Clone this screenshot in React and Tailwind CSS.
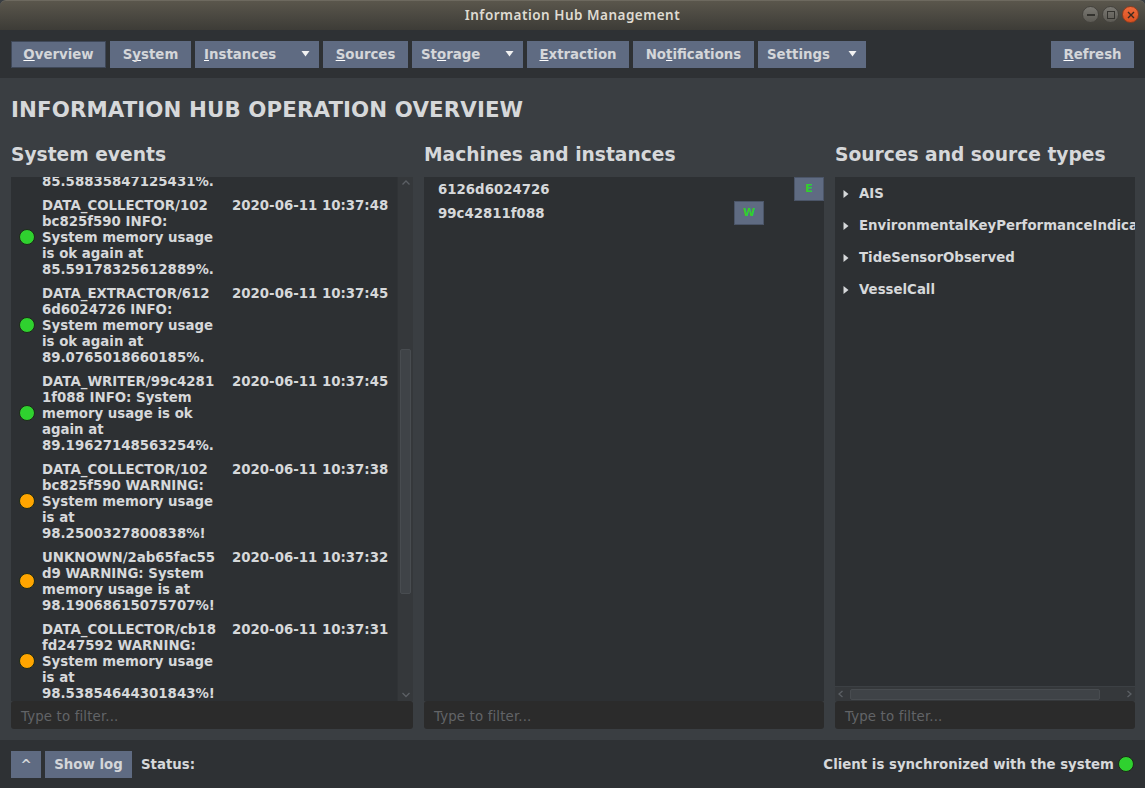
const djv = { fontFamily: '"DejaVu Sans", sans-serif' };

function Mn({ children }) {
  return <span className="underline decoration-white decoration-1 underline-offset-[1px] [text-decoration-skip-ink:none]">{children}</span>;
}

function Btn({ children, className = "" }) {
  return (
    <div className={"h-[27px] pt-[2px] flex items-center bg-[#5f6b82] text-[13.33px] font-bold text-[#d4d6d9] whitespace-nowrap " + className}>
      {children}
    </div>
  );
}

function MenuBtn({ children, width }) {
  return (
    <Btn className={"justify-between pl-[9px] pr-[9px] " + width}>
      <span>{children}</span>
      <svg width="9" height="6" viewBox="0 0 9 6" className="-mt-[2px]"><path d="M0.5 0h8L4.5 5.5z" fill="#f2f2f2" /></svg>
    </Btn>
  );
}

function Dot({ color }) {
  return <span className={"block w-[16px] h-[16px] rounded-full border border-[#1c2a18] shrink-0 " + color} />;
}

const events = [
  { c: "bg-[#2fd12f]", t: "10:37:48", l: ["DATA_COLLECTOR/102", "bc825f590 INFO:", "System memory usage", "is ok again at", "85.59178325612889%."] },
  { c: "bg-[#2fd12f]", t: "10:37:45", l: ["DATA_EXTRACTOR/612", "6d6024726 INFO:", "System memory usage", "is ok again at", "89.0765018660185%."] },
  { c: "bg-[#2fd12f]", t: "10:37:45", l: ["DATA_WRITER/99c4281", "1f088 INFO: System", "memory usage is ok", "again at", "89.19627148563254%."] },
  { c: "bg-[#ffa500]", t: "10:37:38", l: ["DATA_COLLECTOR/102", "bc825f590 WARNING:", "System memory usage", "is at", "98.2500327800838%!"] },
  { c: "bg-[#ffa500]", t: "10:37:32", l: ["UNKNOWN/2ab65fac55", "d9 WARNING: System", "memory usage is at", "98.19068615075707%!"] },
  { c: "bg-[#ffa500]", t: "10:37:31", l: ["DATA_COLLECTOR/cb18", "fd247592 WARNING:", "System memory usage", "is at", "98.53854644301843%!"] },
];

function EventRow({ e }) {
  return (
    <div className="flex items-center pl-[8px] py-[4px]">
      <Dot color={e.c} />
      <div className="ml-[7px] w-[190px] shrink-0 whitespace-nowrap">
        {e.l.map((x, i) => <div key={i} className="h-[16px] leading-[18px]">{x}</div>)}
      </div>
      <div className="self-start h-[16px] leading-[18px] whitespace-nowrap">2020-06-11 {e.t}</div>
    </div>
  );
}

function Filter() {
  return (
    <div className="h-[28px] shrink-0 bg-[#2b2b2b] rounded-[3px] flex items-center px-[10px] pt-[3px] text-[13.33px] tracking-[0.15px] text-[#626467]">
      Type to filter...
    </div>
  );
}

function Heading({ children }) {
  return <h2 className="h-[23px] mb-[11px] leading-[23px] text-[18.67px] font-bold text-[#d6d8da] whitespace-nowrap">{children}</h2>;
}

function Chevron({ d }) {
  return (
    <svg width="10" height="8" viewBox="0 0 10 8" className="shrink-0">
      <path d={d} fill="none" stroke="#5c6065" strokeWidth="1.3" />
    </svg>
  );
}

export default function App() {
  return (
    <div className="w-[1145px] h-[788px] flex flex-col overflow-hidden bg-[#3a3e42]" style={djv}>
      <div className="h-[30px] shrink-0 relative flex items-center justify-center bg-gradient-to-b from-[#5a564c] to-[#3d3c37] border-t border-[#6d695f] rounded-t-[6px]">
        <span className="text-[13.5px] font-semibold text-[#dfdbd2] tracking-[0.5px]" style={{ fontFamily: '"Noto Sans", sans-serif' }}>
          Information Hub Management
        </span>
        <div className="absolute right-[6px] top-[5px] flex gap-[3px]">
          <span className="w-[17px] h-[17px] rounded-full bg-gradient-to-b from-[#7a7872] to-[#5c5a54] border border-[#45433e] flex items-center justify-center">
            <span className="w-[8px] h-[2px] bg-[#33322e]" />
          </span>
          <span className="w-[17px] h-[17px] rounded-full bg-gradient-to-b from-[#7a7872] to-[#5c5a54] border border-[#45433e] flex items-center justify-center">
            <span className="w-[8px] h-[8px] border border-[#33322e]" />
          </span>
          <span className="w-[17px] h-[17px] rounded-full bg-gradient-to-b from-[#ee6a3a] to-[#d9501f] border border-[#8f3d1f] flex items-center justify-center">
            <svg width="8" height="8" viewBox="0 0 8 8"><path d="M1 1l6 6M7 1L1 7" stroke="#3a2a20" strokeWidth="1.4" /></svg>
          </span>
        </div>
      </div>

      <div className="h-[48px] shrink-0 bg-[#2e3134] flex items-center pl-[11px] pr-[11px] gap-[4px]">
        <Btn className="w-[95px] justify-center border border-[#3f4858]"><span><Mn>O</Mn>verview</span></Btn>
        <Btn className="w-[81px] justify-center"><span>S<Mn>y</Mn>stem</span></Btn>
        <MenuBtn width="w-[124px]"><Mn>I</Mn>nstances</MenuBtn>
        <Btn className="w-[85px] justify-center"><span><Mn>S</Mn>ources</span></Btn>
        <MenuBtn width="w-[111px]">St<Mn>o</Mn>rage</MenuBtn>
        <Btn className="w-[102px] justify-center"><span><Mn>E</Mn>xtraction</span></Btn>
        <Btn className="w-[121px] justify-center"><span>No<Mn>t</Mn>ifications</span></Btn>
        <MenuBtn width="w-[108px]">Settings</MenuBtn>
        <Btn className="w-[83px] justify-center ml-auto"><span><Mn>R</Mn>efresh</span></Btn>
      </div>

      <div className="flex-1 min-h-0 flex flex-col pl-[11px] pr-[10px] pb-[11px]">
        <h1 className="h-[26px] mt-[19px] leading-[26px] text-[21.33px] tracking-[0.1px] font-bold text-[#d6d8da] whitespace-nowrap">INFORMATION HUB OPERATION OVERVIEW</h1>
        <div className="flex-1 min-h-0 mt-[20px] flex gap-[11px]">
          <div className="w-[402px] flex flex-col">
            <Heading>System events</Heading>
            <div className="flex-1 min-h-0 bg-[#2d3033] flex text-[13.33px] font-bold text-[#d6d8da]">
              <div className="flex-1 min-w-0 overflow-hidden">
                <div className="pl-[31px] h-[16px] -mt-[4px] leading-[18px]">85.58835847125431%.</div>
                <div className="pt-[4px]">
                  {events.map((e, i) => <EventRow key={i} e={e} />)}
                </div>
              </div>
              <div className="w-[16px] shrink-0 bg-[#35383b] flex flex-col items-center py-[2px] border-l border-[#303336]">
                <Chevron d="M1.5 5.5L5 2l3.5 3.5" />
                <div className="flex-1 flex flex-col w-full">
                  <div className="h-[162px] shrink-0" />
                  <div className="h-[245px] mx-[2px] rounded-[2px] bg-[#3f4347] border border-[#484c50]" />
                </div>
                <Chevron d="M1.5 2L5 5.5 8.5 2" />
              </div>
            </div>
            <Filter />
          </div>

          <div className="w-[400px] flex flex-col">
            <Heading>Machines and instances</Heading>
            <div className="flex-1 min-h-0 bg-[#2d3033] text-[13.33px] font-bold text-[#d6d8da]">
              <div className="h-[24px] flex items-center justify-between pl-[14px]">
                <span className="mt-[2px]">6126d6024726</span>
                <span className="w-[30px] h-[24px] bg-[#5f6b82] border border-[#4b5568] flex items-center justify-center text-[11px] text-[#2fd12f]">E</span>
              </div>
              <div className="h-[24px] flex items-center justify-between pl-[14px] pr-[60px]">
                <span className="mt-[2px]">99c42811f088</span>
                <span className="w-[30px] h-[24px] bg-[#5f6b82] border border-[#4b5568] flex items-center justify-center text-[11px] text-[#2fd12f]">W</span>
              </div>
            </div>
            <Filter />
          </div>

          <div className="w-[300px] flex flex-col">
            <Heading>Sources and source types</Heading>
            <div className="flex-1 min-h-0 bg-[#2d3033] flex flex-col text-[13.33px] font-bold text-[#d6d8da]">
              <div className="flex-1 min-h-0 overflow-hidden">
                {["AIS", "EnvironmentalKeyPerformanceIndicator", "TideSensorObserved", "VesselCall"].map((s) => (
                  <div key={s} className="h-[32px] pt-[2px] flex items-center pl-[8px] whitespace-nowrap">
                    <svg width="6" height="8" viewBox="0 0 6 8" className="shrink-0"><path d="M0.5 0L5.5 4 0.5 8z" fill="#d6d8da" /></svg>
                    <span className="ml-[10px]">{s}</span>
                  </div>
                ))}
              </div>
              <div className="h-[15px] shrink-0 bg-[#35383b] border-t border-[#3c4044] flex items-center px-[1px]">
                <Chevron d="M6.5 1L3 4l3.5 3" />
                <div className="ml-[4px] w-[250px] h-[11px] rounded-[2px] bg-[#3f4347] border border-[#484c50]" />
                <div className="flex-1" />
                <Chevron d="M3.5 1L7 4 3.5 7" />
              </div>
            </div>
            <Filter />
          </div>
        </div>
      </div>

      <div className="h-[48px] shrink-0 bg-[#2e3134] flex items-center pl-[11px] pr-[11px] gap-[4px]">
        <Btn className="w-[30px] justify-center"><span className="mt-[2px]">^</span></Btn>
        <Btn className="w-[87px] justify-center">Show log</Btn>
        <span className="ml-[5px] mt-[2px] text-[13.33px] font-bold text-[#d6d8da]">Status:</span>
        <span className="ml-auto mt-[2px] text-[13.33px] font-bold text-[#d6d8da]">Client is synchronized with the system</span>
        <Dot color="bg-[#2fd12f]" />
      </div>
    </div>
  );
}
